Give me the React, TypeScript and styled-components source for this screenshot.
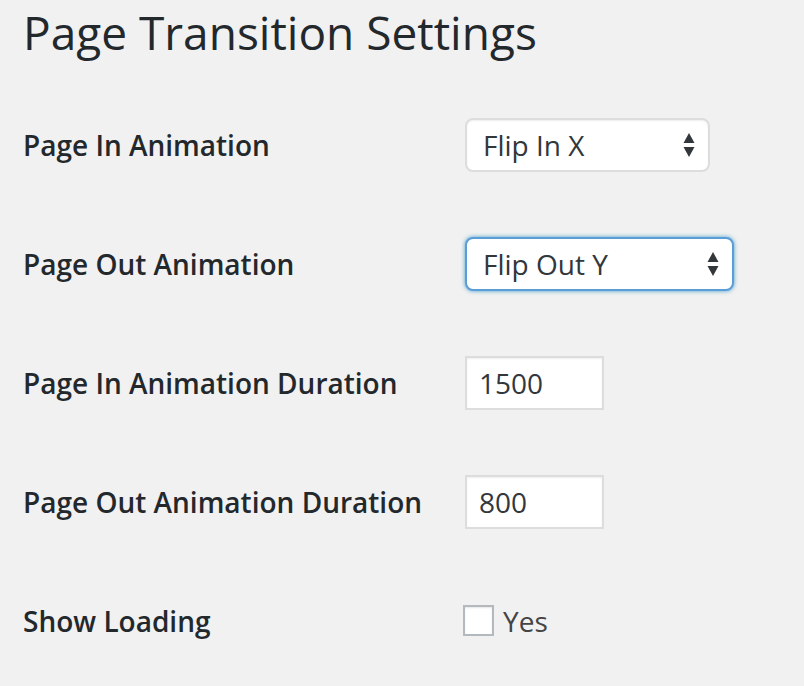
import React from "react";
import styled, { createGlobalStyle } from "styled-components";

const Global = createGlobalStyle`
  html, body { margin: 0; padding: 0; background: #f1f1f1; }
  body { font-family: "Open Sans", "Noto Sans", sans-serif; color: #23282d; }
`;

const Page = styled.div`
  padding: 2px 0 0 23px;
  width: 804px;
  height: 686px;
  box-sizing: border-box;
  overflow: hidden;
`;

const Title = styled.h1`
  margin: 0;
  font-size: 46px;
  font-weight: 400;
  line-height: 60px;
  color: #23282d;
`;

const Form = styled.div`
  display: flex;
  flex-direction: column;
  margin-top: 23px;
`;

const Row = styled.div`
  display: grid;
  grid-template-columns: 442px 1fr;
  align-items: center;
  height: 119px;
`;

const Label = styled.div`
  font-size: 28px;
  font-weight: 600;
  color: #23282d;
`;

const SelectBox = styled.div<{ $w: number; $focus?: boolean }>`
  width: ${(p) => p.$w}px;
  height: 54px;
  box-sizing: border-box;
  background: #fff;
  border: 2px solid ${(p) => (p.$focus ? "#5b9dd9" : "#ddd")};
  border-radius: 8px;
  box-shadow: ${(p) =>
    p.$focus ? "0 0 4px rgba(30,140,190,.8)" : "inset 0 1px 2px rgba(0,0,0,.07)"};
  display: flex;
  align-items: center;
  justify-content: space-between;
  padding: 0 13px 0 16px;
  font-size: 28px;
  color: #32373c;
`;

const Arrows = styled.svg`
  width: 12px;
  height: 26px;
`;

const TextInput = styled.div<{ $w: number }>`
  width: ${(p) => p.$w}px;
  height: 54px;
  box-sizing: border-box;
  background: #fff;
  border: 2px solid #ddd;
  box-shadow: inset 0 1px 2px rgba(0,0,0,.07);
  display: flex;
  align-items: center;
  padding: 0 12px;
  font-size: 28px;
  color: #32373c;
`;

const CheckWrap = styled.label`
  display: flex;
  align-items: center;
  gap: 9px;
  margin-left: -2px;
  font-size: 28px;
  color: #444;
`;

const Check = styled.span`
  width: 31px;
  height: 31px;
  box-sizing: border-box;
  border: 2px solid #b4b9be;
  background: #fff;
  box-shadow: inset 0 1px 2px rgba(0,0,0,.1);
`;

const Select = ({ value, w, focus }: { value: string; w: number; focus?: boolean }) => (
  <SelectBox $w={w} $focus={focus}>
    <span>{value}</span>
    <Arrows viewBox="0 0 12 26">
      <path d="M6 1 L11.5 11 L0.5 11 Z" fill="#32373c" />
      <path d="M0.5 15 L11.5 15 L6 25 Z" fill="#32373c" />
    </Arrows>
  </SelectBox>
);

export default function App() {
  return (
    <Page>
      <Global />
      <Title>Page Transition Settings</Title>
      <Form>
        <Row>
          <Label>Page In Animation</Label>
          <div><Select value="Flip In X" w={245} /></div>
        </Row>
        <Row>
          <Label>Page Out Animation</Label>
          <div><Select value="Flip Out Y" w={269} focus /></div>
        </Row>
        <Row>
          <Label>Page In Animation Duration</Label>
          <div><TextInput $w={139}>1500</TextInput></div>
        </Row>
        <Row>
          <Label>Page Out Animation Duration</Label>
          <div><TextInput $w={139}>800</TextInput></div>
        </Row>
        <Row>
          <Label>Show Loading</Label>
          <CheckWrap><Check /><span>Yes</span></CheckWrap>
        </Row>
      </Form>
    </Page>
  );
}
